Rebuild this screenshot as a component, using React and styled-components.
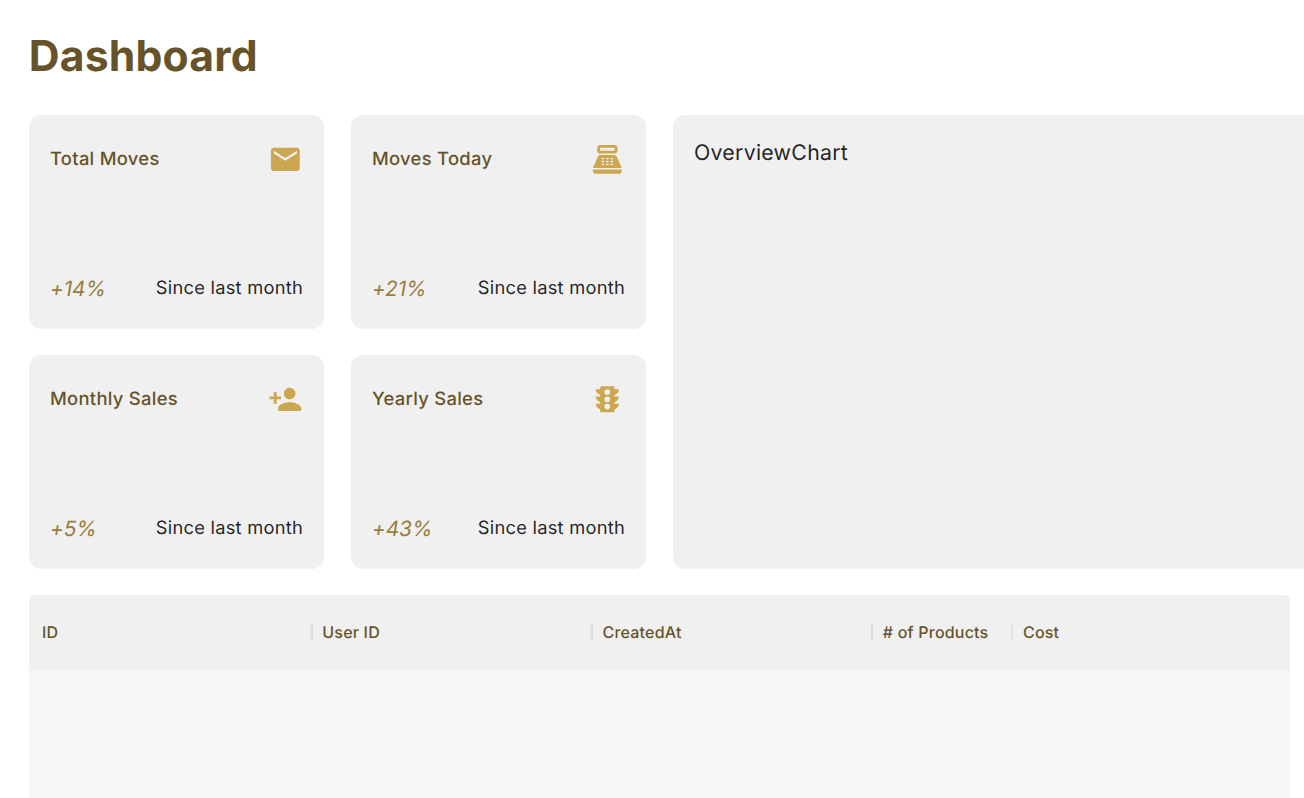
import React from "react";
import styled, { createGlobalStyle } from "styled-components";
import { MdEmail, MdPointOfSale, MdPersonAdd, MdTraffic } from "react-icons/md";

const GlobalStyle = createGlobalStyle`
  *, *::before, *::after { box-sizing: border-box; }
  html, body { margin: 0; height: 100%; overflow: hidden; background: #fff; }
  body {
    font-family: Inter, "Liberation Sans", sans-serif;
    color: rgba(0, 0, 0, 0.87);
    text-rendering: geometricPrecision;
    -webkit-font-smoothing: antialiased;
  }
`;

const Page = styled.main`
  height: 798px;
  overflow: hidden;
  padding: 30px 0 0 28.67px;
`;

const Title = styled.h1`
  margin: 0;
  height: 85.33px;
  font-size: 42.67px;
  line-height: 54px;
  font-weight: 700;
  letter-spacing: 0.2px;
  color: #665329;
`;

const Grid = styled.div`
  display: grid;
  width: 1905.3px;
  grid-template-columns: repeat(12, 1fr);
  grid-auto-rows: 213.33px;
  gap: 26.67px;
`;

const Panel = styled.section`
  background: #f0f0f0;
  border-radius: 12px;
`;

const StatCard = styled(Panel)`
  grid-column: span 2;
  display: flex;
  flex-direction: column;
  justify-content: space-between;
  padding: 26.67px 21.33px;
`;

const Row = styled.div`
  display: flex;
  align-items: center;
  justify-content: space-between;
`;

const CardTitle = styled.h2`
  margin: 0;
  font-size: 18.4px;
  line-height: 30px;
  font-weight: 500;
  letter-spacing: 0.29px;
  color: #665329;
`;

const IconBox = styled.span`
  display: flex;
  color: #cca752;
  svg { width: 34.67px; height: 34.67px; }
`;

const Change = styled.span`
  height: 28px;
  font-size: 20.9px;
  line-height: 32px;
  font-style: italic;
  letter-spacing: -0.1px;
  color: #997d3d;
`;

const Note = styled.span`
  font-size: 18.28px;
  line-height: 28px;
  letter-spacing: 0.25px;
  margin-right: -0.33px;
`;

const ChartPanel = styled(Panel)`
  grid-column: span 8;
  grid-row: span 2;
  padding: 21.33px;
  font-size: 21.33px;
  line-height: 32px;
  letter-spacing: 0.25px;
`;

const Table = styled.section`
  grid-column: span 8;
  grid-row: span 3;
  display: flex;
  flex-direction: column;
  border-radius: 5.33px;
  overflow: hidden;
  background: #f6f6f6;
`;

const HeaderRow = styled.div`
  display: grid;
  grid-template-columns: ${(p) => p.$tracks};
  height: 74.67px;
  background: #f0f0f0;
`;

const HeaderCell = styled.div`
  min-width: 0;
  display: flex;
  align-items: center;
  justify-content: space-between;
  padding: 0 0 1.33px 13.33px;
  font-size: 16px;
  line-height: 24px;
  font-weight: 500;
  letter-spacing: 0.2px;
  white-space: nowrap;
  color: #665329;
`;

const Separator = styled.i`
  width: 2.67px;
  height: 16px;
  margin-right: -3.67px;
  background: #e0e0e0;
`;

const stats = [
  { title: "Total Moves", change: "+14%", Icon: MdEmail },
  { title: "Moves Today", change: "+21%", Icon: MdPointOfSale },
  { title: "Monthly Sales", change: "+5%", Icon: MdPersonAdd },
  { title: "Yearly Sales", change: "+43%", Icon: MdTraffic },
];

const columns = [
  { label: "ID", flex: 1 },
  { label: "User ID", flex: 1 },
  { label: "CreatedAt", flex: 1 },
  { label: "# of Products", flex: 0.5 },
  { label: "Cost", flex: 1 },
];

const tracks = columns.map((c) => `minmax(0, ${c.flex}fr)`).join(" ");

function Stat({ title, change, Icon }) {
  return (
    <StatCard>
      <Row>
        <CardTitle>{title}</CardTitle>
        <IconBox><Icon /></IconBox>
      </Row>
      <Row>
        <Change>{change}</Change>
        <Note>Since last month</Note>
      </Row>
    </StatCard>
  );
}

export default function App() {
  return (
    <>
      <GlobalStyle />
      <Page>
        <Title>Dashboard</Title>
        <Grid>
          {stats.slice(0, 2).map((s) => <Stat key={s.title} {...s} />)}
          <ChartPanel>OverviewChart</ChartPanel>
          {stats.slice(2).map((s) => <Stat key={s.title} {...s} />)}
          <Table>
            <HeaderRow $tracks={tracks}>
              {columns.map((c, i) => (
                <HeaderCell key={c.label}>
                  {c.label}
                  {i < columns.length - 1 && <Separator />}
                </HeaderCell>
              ))}
            </HeaderRow>
          </Table>
        </Grid>
      </Page>
    </>
  );
}
